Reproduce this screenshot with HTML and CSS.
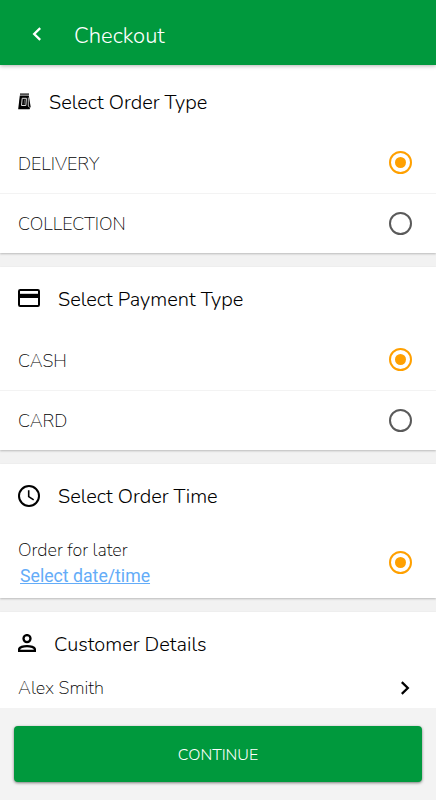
FILE: index.html
```html
<!DOCTYPE html>
<html lang="en">
<head>
<meta charset="utf-8">
<title>Checkout</title>
<link rel="stylesheet" href="styles.css">
</head>
<body>
<div class="screen">
  <header class="topbar">
    <svg class="back" viewBox="0 0 10 14" width="10" height="14"><path d="M8.2 1.200 2.200 7l6 5.800" fill="none" stroke="#fff" stroke-width="2.300"/></svg>
    <h1 class="page-title">Checkout</h1>
  </header>
  <main class="content">
    <section class="card card-first">
      <div class="heading heading-bag">
        <svg width="14" height="17" viewBox="0 0 14 17"><path d="M2 .5h9v1.200H2z"/><path d="M1.800 2.500h9l1.800 11-1 2.800H.2z"/><path d="M4.200 5.300h4.200l-.5 7.200H3.500z" fill="none" stroke="#ddd" stroke-width="1"/><path d="M6.600 6.500l-.5 5" stroke="#666" stroke-width=".8"/><path d="M10.300 4.500v8.500l1.300 1.500" fill="none" stroke="#eee" stroke-width=".8"/></svg>
        <h2>Select Order Type</h2>
      </div>
      <div class="row first"><span>DELIVERY</span><span class="radio on"></span></div>
      <div class="row divided"><span>COLLECTION</span><span class="radio"></span></div>
    </section>
    <section class="card">
      <div class="heading">
        <svg class="card-icon" width="22" height="18" viewBox="0 0 22 18"><rect x="1" y="1" width="20" height="16" rx="1.200" fill="none" stroke="#000" stroke-width="2"/><path d="M1 4.800h20v4.200H1z"/></svg>
        <h2>Select Payment Type</h2>
      </div>
      <div class="row first"><span>CASH</span><span class="radio on"></span></div>
      <div class="row divided"><span>CARD</span><span class="radio"></span></div>
    </section>
    <section class="card">
      <div class="heading">
        <svg width="22" height="22" viewBox="0 0 22 22"><circle cx="11" cy="11" r="10" fill="none" stroke="#000" stroke-width="2"/><path d="M10.700 5.300v6.300l5 3.200" fill="none" stroke="#000" stroke-width="1.600"/></svg>
        <h2>Select Order Time</h2>
      </div>
      <div class="row row-later">
        <div class="later"><span class="when">Order for later</span><a class="pick">Select date/time</a></div>
        <span class="radio on"></span>
      </div>
    </section>
    <section class="card card-customer">
      <div class="heading">
        <svg class="person" width="18" height="18" viewBox="0 0 18 18"><g fill="none" stroke="#000" stroke-width="2.300"><circle cx="9" cy="4.600" r="3.500"/><path d="M1.100 16.900v-1.500C1.100 13.200 5.500 12.100 9 12.100s7.900 1.100 7.900 3.300v1.500z"/></g></svg>
        <h2>Customer Details</h2>
      </div>
      <div class="row row-name"><span>Alex Smith</span><svg width="10" height="14" viewBox="0 0 10 14"><path d="m1.800 1.200 6 5.800-6 5.800" fill="none" stroke="#000" stroke-width="2.300"/></svg></div>
    </section>
  </main>
  <footer class="footer"><button class="continue">CONTINUE</button></footer>
</div>
</body>
</html>
```
FILE: styles.css
```css
* { box-sizing: border-box; }
body { margin: 0; background: #f2f2f2; font-family: Nunito, Lato, sans-serif; font-weight: 300; color: #000; }
h1, h2 { margin: 0; font-weight: 300; }
svg { display: block; flex: none; }
.screen { width: 436px; height: 800px; display: flex; flex-direction: column; overflow: hidden; }
.topbar { height: 65px; flex: none; display: flex; align-items: center; padding: 5px 0 0 32px; background: #00993d; color: #fff; box-shadow: 0 1px 4px rgba(0,0,0,.3); z-index: 1; }
.back { margin-top: -3px; }
.page-title { margin-left: 32px; padding-top: 1px; font-size: 22px; line-height: 30px; white-space: nowrap; }
.content { flex: 1; min-height: 0; overflow: hidden; display: flex; flex-direction: column; gap: 14px; }
.card { flex: none; background: #fff; box-shadow: 0 1px 2px rgba(0,0,0,.24); }
.heading { height: 63px; display: flex; align-items: center; padding-left: 18px; gap: 18px; }
.heading-bag { height: 68px; padding-top: 5px; gap: 17px; }
.heading h2 { font-size: 20px; line-height: 28px; padding-top: 2px; font-weight: 345; white-space: nowrap; }
.card-icon, .person { margin-top: -1px; }
.row { height: 60px; display: flex; align-items: center; justify-content: space-between; padding: 0 24px 0 18px; font-size: 18px; font-weight: 250; line-height: 24px; white-space: nowrap; }
.row > span:first-child { padding-top: 1px; }
.first .radio { margin-top: -1px; }
.divided { border-top: 1px solid #f3f3f3; }
.radio { width: 23px; height: 23px; border: 2px solid #5a5a5a; border-radius: 50%; display: grid; place-items: center; flex: none; }
.radio.on { border-color: #ffa000; }
.radio.on::after { content: ""; width: 11px; height: 11px; border-radius: 50%; background: #ffa000; }
.row-later { height: 71px; }
.later { display: flex; flex-direction: column; }
.when { line-height: 26px; }
.pick { margin-left: 2px; font: 400 17.7px/26px Roboto, sans-serif; color: #64acf8; text-decoration: underline; }
.row-name { height: 40px; padding-right: 26px; padding-bottom: 14px; }
.row-name > span:first-child { padding-top: 0; }
.footer { height: 92px; flex: none; padding: 18px 14px; background: #f3f3f3; }
.continue { display: flex; align-items: center; justify-content: center; width: 100%; height: 56px; padding: 2px 0 0; border: 0; border-radius: 4px; background: #00993d; color: #fff; font: inherit; font-size: 16px; box-shadow: 0 1px 3px rgba(0,0,0,.5); }
```
